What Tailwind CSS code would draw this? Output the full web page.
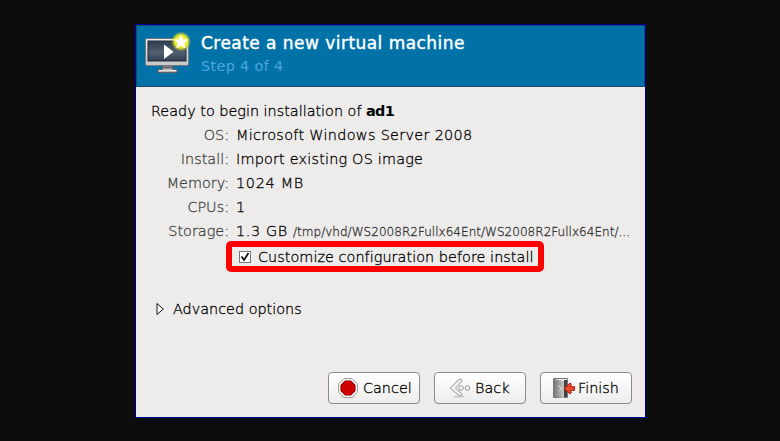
<!DOCTYPE html>
<html lang="en">
<head>
<meta charset="utf-8">
<title>Create a new virtual machine</title>
<script src="https://cdn.jsdelivr.net/npm/@tailwindcss/browser@4"></script>
</head>
<body class="h-[441px] w-[780px] overflow-hidden bg-[#0d0d0d] pt-[24px] pl-[135px] font-['DejaVu_Sans',sans-serif] text-[14.4px] leading-[24px] font-extralight whitespace-nowrap text-black [-webkit-text-stroke:0.3px_currentColor]">
<main class="flex h-[394px] w-[511px] flex-col border border-[#000099] bg-[#edeceb]">
  <header class="flex h-[62px] shrink-0 border border-[#174a68] bg-[#0072a8] pt-[6px] pl-[8px]">
    <svg class="h-[44px] w-[48px] shrink-0" viewBox="0 0 48 44">
      <defs>
        <linearGradient id="screen" x1="0" y1="0" x2="0" y2="1"><stop offset="0" stop-color="#2d3d50"/><stop offset=".6" stop-color="#536071"/><stop offset="1" stop-color="#303c4e"/></linearGradient>
        <linearGradient id="bezel" x1="0" y1="0" x2="0" y2="1"><stop offset="0" stop-color="#eee"/><stop offset="1" stop-color="#c6c6c6"/></linearGradient>
        <radialGradient id="glow"><stop offset="0" stop-color="#ffff50"/><stop offset=".65" stop-color="#e2e52a"/><stop offset="1" stop-color="#c8d420" stop-opacity="0"/></radialGradient>
      </defs>
      <path d="M17.500 34h10v3.500h4.500v3H13v-3h4.500z" fill="#b5b5b5" stroke="#646464"/>
      <path d="M14 38.500h17" stroke="#e4e4e4"/>
      <path d="M18 35.500h9" stroke="#666" stroke-width="2"/>
      <rect x=".5" y="6.500" width="43" height="27" rx="1.500" fill="url(#bezel)" stroke="#777"/>
      <rect x="3" y="9" width="38" height="20" fill="url(#screen)" stroke="#252d3a"/>
      <path d="M19 12.500v14.500l9.500-7.200z" fill="#fff"/>
      <circle cx="36" cy="9.500" r="10" fill="url(#glow)"/>
      <path transform="translate(-1 -1)" d="M37 4l2 4.200 4.800.6-3.500 3.400 1 4.800-4.300-2.400-4.300 2.400 1-4.800-3.500-3.400 4.800-.6z" fill="#fff" stroke="#ffffb0" stroke-width=".7"/>
    </svg>
    <div class="pl-[8px]">
      <h1 class="text-[17px] leading-[22px] font-normal tracking-[0.46px] text-white [-webkit-text-stroke:0.4px_white]">Create a new virtual machine</h1>
      <p class="font-normal tracking-[0.35px] text-[#4da6dc] [-webkit-text-stroke:0px]">Step 4 of 4</p>
    </div>
  </header>
  <section class="flex grow flex-col pt-[12px] pl-[15px]">
    <p>Ready to begin installation of <b class="font-bold tracking-[-0.7px] [-webkit-text-stroke:0px]">ad1</b></p>
    <dl class="grid grid-cols-[78px_1fr] gap-x-[7px]">
      <dt class="text-right text-[#444]">OS:</dt><dd class="tracking-[0.32px]">Microsoft Windows Server 2008</dd>
      <dt class="text-right text-[#444]">Install:</dt><dd class="tracking-[0.2px]">Import existing OS image</dd>
      <dt class="text-right text-[#444]">Memory:</dt><dd class="tracking-[0.7px]">1024 MB</dd>
      <dt class="text-right text-[#444]">CPUs:</dt><dd>1</dd>
      <dt class="text-right text-[#444]">Storage:</dt><dd><span class="tracking-[0.62px]">1.3 GB </span><span class="text-[12px] tracking-[0.03px] text-[#333]">/tmp/vhd/WS2008R2Fullx64Ent/WS2008R2Fullx64Ent/...</span></dd>
    </dl>
    <label class="-mt-[3px] ml-[75px] flex h-[31px] w-[318px] items-center rounded-[5px] border-6 border-[#ff0000] pl-[7px]">
      <svg class="mr-[7px] size-[12px] shrink-0" viewBox="0 0 12 12"><rect x=".5" y=".5" width="11" height="11" fill="#fff" stroke="#777"/><path d="M2.500 5.500l2.500 3.500 4.500-7" fill="none" stroke="#111" stroke-width="1.800"/></svg>
      <span class="tracking-[0.05px]">Customize configuration before install</span>
    </label>
    <div class="mt-[25px] flex items-center pl-[5px]">
      <svg class="mr-[9px] h-[14px] w-[8px]" viewBox="0 0 8 14"><path d="M1 1.500v11L7.300 7z" fill="#fff" stroke="#111"/></svg>
      <span>Advanced options</span>
    </div>
  </section>
  <footer class="flex h-[45px] shrink-0 justify-end gap-[14px] pr-[13px]">
    <button class="flex h-[32px] w-[92px] items-center rounded-[4px] border border-[#8c8c8b] bg-linear-to-b from-white to-[#ededec] pl-[8px]">
      <svg class="mr-[4px] size-[22px] shrink-0" viewBox="0 0 22 22"><ellipse cx="11" cy="20" rx="7" ry="1.500" fill="#ccc"/><path d="M7 1.500h8L20.500 7v8L15 20.500H7L1.500 15V7z" fill="#eee" stroke="#a5a5a5"/><path d="M8 4h6l4 4v6l-4 4H8l-4-4V8z" fill="#d00000" stroke="#a00000"/></svg>
      <span>Cancel</span>
    </button>
    <button class="flex h-[32px] w-[92px] items-center rounded-[4px] border border-[#8c8c8b] bg-linear-to-b from-white to-[#ededec] pl-[14px]">
      <svg class="mr-[4px] h-[22px] w-[22px] shrink-0" viewBox="0 0 22 22"><ellipse cx="10" cy="19.500" rx="6" ry="1.500" fill="#d5d5d4"/><path d="M10 2.500q3-1.500 3 1.500L6.500 11l6.500 6q0 3-3 1.500L1 11z" fill="#f0f0f0" stroke="#999" stroke-linejoin="round"/><circle cx="12" cy="11" r="2.300" fill="#f4f4f4" stroke="#999"/><circle cx="18.500" cy="11" r="2.300" fill="#f4f4f4" stroke="#999"/></svg>
      <span>Back</span>
    </button>
    <button class="flex h-[32px] w-[92px] items-center rounded-[4px] border border-[#8c8c8b] bg-linear-to-b from-white to-[#ededec] pl-[12px]">
      <svg class="mr-[3px] h-[22px] w-[22px] shrink-0" viewBox="0 0 22 22"><defs><linearGradient id="door"><stop offset="0" stop-color="#777"/><stop offset="1" stop-color="#c9c9c9"/></linearGradient></defs><path d="M.5 1.500h14v19H.5z" fill="#eee" stroke="#777"/><path d="M1 2l10 2v17l-10-1z" fill="url(#door)"/><path d="M11 3h3v17h-3z" fill="#444"/><path d="M6 9l3 2.500L6 14" fill="none" stroke="#eee"/><path d="M11 11.500l6-5.500 1.500 1.500-1.500 2.200h4.500v3.600H17l1.500 2.200L17 17z" fill="#f04b2b" stroke="#a91508" stroke-linejoin="round"/></svg>
      <span>Finish</span>
    </button>
  </footer>
</main>
</body>
</html>
